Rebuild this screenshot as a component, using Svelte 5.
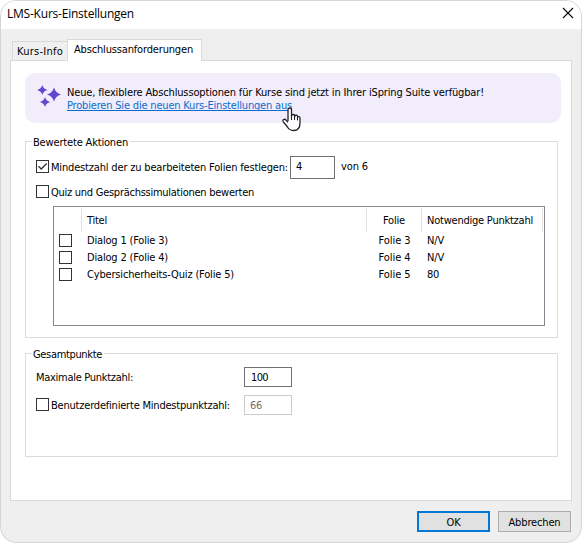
<script>
  const rows = [
    { title: 'Dialog 1 (Folie 3)', w: 81, slide: 'Folie 3', score: 'N/V', sw: 17 },
    { title: 'Dialog 2 (Folie 4)', w: 81, slide: 'Folie 4', score: 'N/V', sw: 17 },
    { title: 'Cybersicherheits-Quiz (Folie 5)', w: 147, slide: 'Folie 5', score: '80', sw: 12 }
  ];

  // Adjusts tracking so that a label takes up its intended width.
  function fit(node, width) {
    const natural = node.getBoundingClientRect().width;
    node.style.letterSpacing = (width - natural) / node.textContent.length + 'px';
  }
</script>

{#snippet label(text, width)}<span class="label" use:fit={width}>{text}</span>{/snippet}

{#snippet box(checked)}
  <span class="box">
    {#if checked}
      <svg width="11" height="11" viewBox="0 0 11 11"><path d="M1.5 5.3 4.2 8 9.7 2.5" fill="none" stroke="#333" stroke-width="1.3" /></svg>
    {/if}
  </span>
{/snippet}

<div class="window">
  <header>
    <h1>{@render label('LMS-Kurs-Einstellungen', 127)}</h1>
    <svg class="close" width="12" height="12" viewBox="0 0 12 12"><path d="M1 1 11 11M11 1 1 11" stroke="#111" stroke-width="1.2" /></svg>
  </header>

  <nav>
    <div class="tab">{@render label('Kurs-Info', 46)}</div>
    <div class="tab active">{@render label('Abschlussanforderungen', 119)}</div>
  </nav>

  <main>
    <section class="banner">
      <svg class="sparkles" width="24" height="23" viewBox="0 0 24 23" fill="#6449cf">
        <path d="M5.3 0Q6.3 4 10.5 5Q6.3 6 5.3 10Q4.3 6 0 5Q4.3 4 5.3 0Z" />
        <path d="M17 2.5Q18.6 7.9 24 9.5Q18.6 11.1 17 16.5Q15.4 11.1 10 9.5Q15.4 7.9 17 2.5Z" />
        <path d="M8 12Q9 16 13.2 17Q9 18 8 22Q7 18 2.8 17Q7 16 8 12Z" />
      </svg>
      <div class="message">
        <div>{@render label('Neue, flexiblere Abschlussoptionen für Kurse sind jetzt in Ihrer iSpring Suite verfügbar!', 417)}</div>
        <div class="link">{@render label('Probieren Sie die neuen Kurs-Einstellungen aus', 225)}</div>
      </div>
      <svg class="pointer" width="20" height="25" viewBox="0 0 20 25">
        <path d="M6 14V3Q6 1 7.8 1T9.5 3V9Q9.7 7.5 11.3 7.5T13 9.2Q13.2 8 14.5 8.2T15.5 10Q18 8.8 18 11.5V16Q18 23.5 11.5 23.5Q7.5 23.5 5.5 20L1.3 14.8Q.3 13.2 1.7 12.5T4.2 13.3L6 15.4" fill="#fff" stroke="#20202b" stroke-width="1.3" stroke-linejoin="round" />
        <path d="M9.5 9V13M12.5 9V13M15.5 10V13.5" stroke="#20202b" stroke-width="1.1" />
      </svg>
    </section>

    <section class="group actions">
      <h2>{@render label('Bewertete Aktionen', 95)}</h2>
      <div class="line first">
        {@render box(true)}
        <span class="caption">{@render label('Mindestzahl der zu bearbeiteten Folien festlegen:', 237)}</span>
        <div class="field slides">{@render label('4', 6)}</div>
        <span class="total">{@render label('von 6', 27)}</span>
      </div>
      <div class="line second">
        {@render box(false)}
        {@render label('Quiz und Gesprächssimulationen bewerten', 203)}
      </div>
      <div class="list">
        <div class="row head">
          <div class="c0"></div>
          <div class="c1">{@render label('Titel', 20)}</div>
          <div class="c2">{@render label('Folie', 22)}</div>
          <div class="c3">{@render label('Notwendige Punktzahl', 106)}</div>
        </div>
        {#each rows as r}
          <div class="row">
            <div class="c0">{@render box(false)}</div>
            <div class="c1">{@render label(r.title, r.w)}</div>
            <div class="c2">{@render label(r.slide, 32)}</div>
            <div class="c3">{@render label(r.score, r.sw)}</div>
          </div>
        {/each}
      </div>
    </section>

    <section class="group points">
      <h2>{@render label('Gesamtpunkte', 69)}</h2>
      <div class="line max">
        <span class="name">{@render label('Maximale Punktzahl:', 97)}</span>
        <div class="field">{@render label('100', 17)}</div>
      </div>
      <div class="line min">
        <span class="name">{@render box(false)}{@render label('Benutzerdefinierte Mindestpunktzahl:', 179)}</span>
        <div class="field disabled">{@render label('66', 12)}</div>
      </div>
    </section>
  </main>

  <footer>
    <div class="button primary">{@render label('OK', 14)}</div>
    <div class="button">{@render label('Abbrechen', 52)}</div>
  </footer>
</div>

<style>
  :global(body) { background: #fff; }
  .window {
    box-sizing: border-box; width: 582px; height: 543px; overflow: hidden;
    border: 1px solid #d5d5d5; border-radius: 16px; background: #efefef;
    font: 11px/14px "DejaVu Sans Condensed", "DejaVu Sans", sans-serif; font-stretch: condensed; color: #000;
    display: flex; flex-direction: column;
  }
  h1, h2 { margin: 0; font: inherit; }
  .label { display: inline-block; white-space: pre; margin: 1px 0 -1px; }
  header { height: 28px; flex: none; background: #fff; display: flex; justify-content: space-between; padding: 0 7px 0 6px; }
  h1 { font: 12px/16px "Open Sans", "Noto Sans", sans-serif; padding-top: 4px; }
  .close { margin-top: 6px; }
  nav { display: flex; align-items: flex-end; height: 31px; flex: none; padding-left: 11px; }
  .tab { box-sizing: border-box; width: 55px; height: 19px; border: 1px solid #d9d9d9; border-width: 1px 0 0 1px; background: #f0f0f0; padding: 2px 0 0 4px; }
  .tab.active { width: 135px; height: 22px; border-width: 1px 1px 0; background: #fff; padding: 2px 0 0 6px; z-index: 1; margin-bottom: -1px; }
  main { box-sizing: border-box; height: 441px; flex: none; margin: 0 9px; border: 1px solid #d9d9d9; background: #fff; padding: 12px 13px 0 14px; }
  .banner { position: relative; height: 50px; width: 536px; border-radius: 10px; background: #f1edfb; display: flex; box-sizing: border-box; padding: 12px 0 0 12px; }
  .message { margin-left: 6px; }
  .message > div { height: 13px; line-height: 13px; display: flex; }
  .link { color: #0b6ccf; width: max-content; border-bottom: 1px solid #0b6ccf; box-sizing: border-box; }
  .pointer { position: absolute; left: 257px; top: 34px; }
  .group { box-sizing: border-box; width: 533px; border: 1px solid #dcdcdc; }
  .group h2 { width: max-content; height: 14px; margin: -7px 0 0 6px; padding: 0 2px 0 1px; background: #fff; }
  .actions { height: 197px; margin-top: 18px; }
  .points { height: 104px; margin-top: 15px; }
  .line { display: flex; align-items: center; padding-left: 10px; }
  .box { box-sizing: border-box; flex: none; width: 13px; height: 13px; border: 1px solid #333; background: #fff; display: flex; }
  .line .box { margin-right: 2px; }
  .first { height: 23px; margin-top: 7px; }
  .first .box { margin-bottom: 2px; }
  .caption { margin-bottom: 1px; }
  .second { height: 13px; margin-top: 6px; }
  .field { box-sizing: border-box; width: 48px; height: 20px; border: 1px solid #707070; padding: 2px 0 0 6px; }
  .slides { width: 45px; height: 23px; margin-left: 2px; padding: 2px 0 0 5px; }
  .total { margin: -3px 0 0 6px; }
  .list { box-sizing: border-box; width: 492px; height: 120px; margin: 8px 0 0 27px; border: 1px solid #828790; padding-top: 1px; }
  .row { display: flex; height: 17px; align-items: center; }
  .head { height: 24px; }
  .row > div { box-sizing: border-box; }
  .c0 { width: 28px; padding-left: 5px; }
  .c1 { width: 285px; padding-left: 5px; }
  .c2 { width: 55px; text-align: center; }
  .c3 { width: 121px; padding-left: 5px; }
  .head > div { height: 24px; padding-top: 5px; border-right: 1px solid #e2e2e2; }
  .name { display: flex; align-items: center; width: 208px; }
  .max { margin-top: 6px; }
  .min { margin-top: 8px; }
  .min .box { margin-bottom: 1px; }
  .disabled { border-color: #ccc; color: #6d6d6d; }
  .disabled { padding-left: 5px; }
  footer { display: flex; justify-content: flex-end; gap: 8px; padding: 10px 10px 0 0; }
  .button { box-sizing: border-box; width: 73px; height: 21px; border: 1px solid #adadad; background: #e1e1e1; display: flex; align-items: center; justify-content: center; }
  .primary { border: 2px solid #0078d7; }
</style>
